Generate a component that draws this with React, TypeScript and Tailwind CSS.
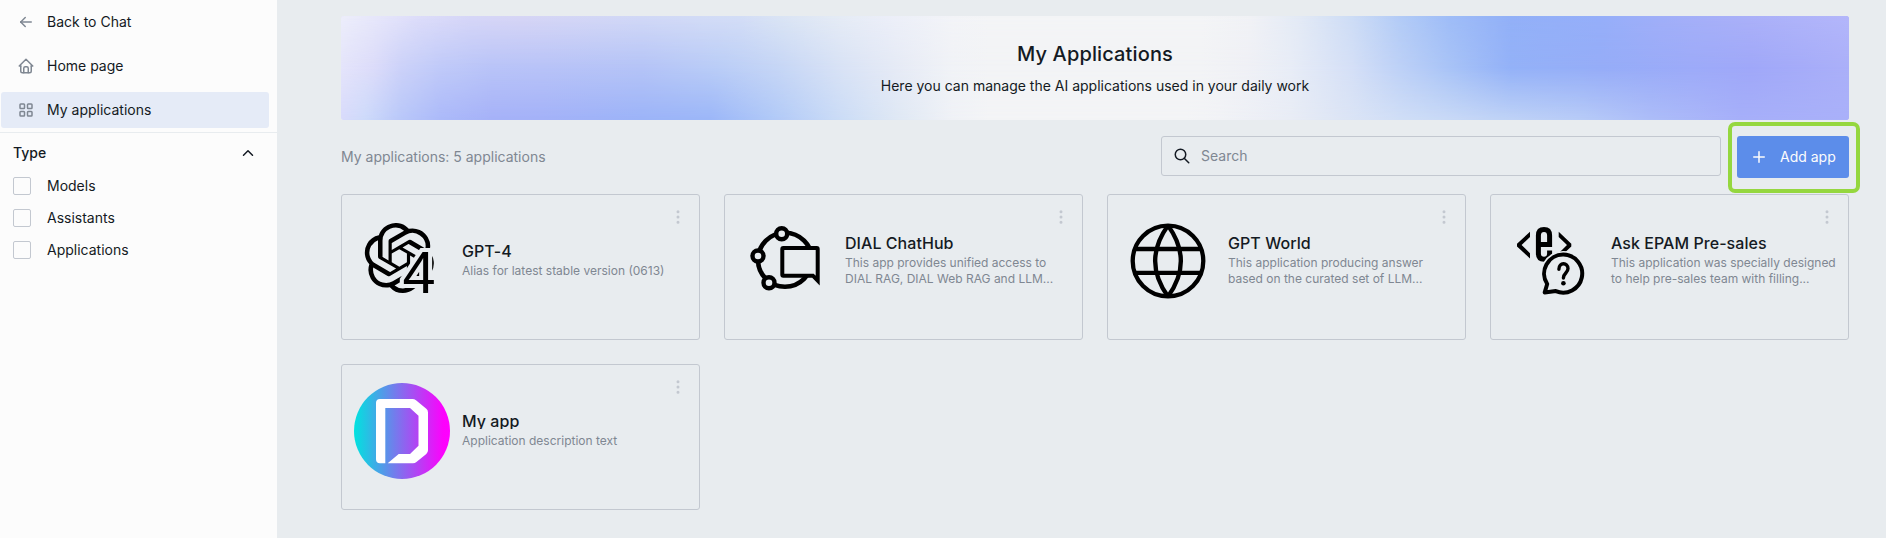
import type { ReactNode } from 'react';
import { SiOpenai } from 'react-icons/si';
import {
  TbArrowLeft,
  TbChevronUp,
  TbDotsVertical,
  TbHome,
  TbLayoutGrid,
  TbPlus,
  TbSearch,
} from 'react-icons/tb';

function GptIcon() {
  return (
    <svg width="96" height="96" viewBox="0 0 96 96">
      <SiOpenai x="10.3" y="10" width="70" height="70" size={70} color="#000" />
      <text
        x="48.4"
        y="80"
        fontFamily="Liberation Sans, sans-serif"
        fontSize="59.5"
        fill="#000"
        stroke="#e8ecef"
        strokeWidth="8"
        paintOrder="stroke"
      >
        4
      </text>
    </svg>
  );
}

function ChatHubIcon() {
  return (
    <svg width="96" height="96" viewBox="0 0 96 96" fill="#e8ecef" stroke="#000">
      <circle cx="48" cy="46.8" r="27" strokeWidth="4.6" />
      <circle cx="44.7" cy="20.7" r="5.5" strokeWidth="4.4" />
      <circle cx="21" cy="43" r="5.5" strokeWidth="4.4" />
      <circle cx="32" cy="69.8" r="5.5" strokeWidth="4.4" />
      <path d="M46.3 35H79.7a1 1 0 0 1 1 1V67.6L75.9 62.7H46.3a1 1 0 0 1-1-1V36a1 1 0 0 1 1-1z" strokeWidth="4" />
    </svg>
  );
}

function GlobeIcon() {
  return (
    <svg width="96" height="96" viewBox="0 0 96 96" fill="none" stroke="#000" strokeWidth="4.3">
      <circle cx="48" cy="48" r="35.3" />
      <path d="M15 36H81M15 59.8H81M48 12.5C31 36 31 60 48 83.5M48 12.5C65 36 65 60 48 83.5" />
    </svg>
  );
}

function PreSalesIcon() {
  return (
    <svg width="96" height="96" viewBox="0 0 96 96" fill="none" stroke="#000">
      <path
        d="M27 18.7V24L18.6 32 27 40.2V45.4L14 33.5V30.7zM55.7 18.7V24L64 32 55.7 40.2V45.4L68.3 33.5V30.7z"
        fill="#000"
        stroke="none"
      />
      <path d="M36 31.6H46.6V22.5Q46.6 16.6 41 16.6T35.4 22.5V40.5Q35.4 46.2 41 46.2T46.6 40.5V37.5" strokeWidth="5" />
      <path
        d="M60.4 41.6a19 19 0 1 1-7.6 36.5L41.7 79.4 44.4 71.2A19 19 0 0 1 60.4 41.6z"
        stroke="#e8ecef"
        strokeWidth="7.4"
      />
      <path
        d="M60.4 41.6a19 19 0 1 1-7.6 36.5L41.7 79.4 44.2 71A19 19 0 0 1 60.4 41.6z"
        fill="#e8ecef"
        strokeWidth="4"
        strokeLinejoin="round"
      />
      <path
        d="M55.9 56.2C55.9 49 65 49 65 55.6C65 60 60.4 60 60.4 65"
        strokeWidth="3.4"
        strokeLinecap="round"
      />
      <circle cx="60.4" cy="70.3" r="2.3" fill="#000" stroke="none" />
    </svg>
  );
}

function DialIcon() {
  return (
    <svg width="96" height="96" viewBox="0 0 96 96">
      <defs>
        <linearGradient id="dial" x1="0" x2="1" y1="0" y2="0">
          <stop offset="0" stopColor="#00e3df" />
          <stop offset="0.93" stopColor="#fc02fc" />
          <stop offset="1" stopColor="#ff00ff" />
        </linearGradient>
      </defs>
      <circle cx="48" cy="48" r="48" fill="url(#dial)" />
      <path
        d="M26 16H58.5Q60.4 16 62 17.3L72.3 25.8Q74 27.2 74 29.4V67.3Q74 69.5 72.3 70.9L62.4 79.1Q61 80.3 59 80.3H33.7L44.7 71H56L64.5 62.7V32.7L56 25H31.3V80.3H26Q22 80.3 22 76.3V20Q22 16 26 16z"
        fill="#fff"
      />
    </svg>
  );
}

const apps: { title: string; lines: string[]; icon: ReactNode }[] = [
  { title: 'GPT-4', lines: ['Alias for latest stable version (0613)'], icon: <GptIcon /> },
  {
    title: 'DIAL ChatHub',
    lines: ['This app provides unified access to', 'DIAL RAG, DIAL Web RAG and LLM...'],
    icon: <ChatHubIcon />,
  },
  {
    title: 'GPT World',
    lines: ['This application producing answer', 'based on the curated set of LLM...'],
    icon: <GlobeIcon />,
  },
  {
    title: 'Ask EPAM Pre-sales',
    lines: ['This application was specially designed', 'to help pre-sales team with filling...'],
    icon: <PreSalesIcon />,
  },
  { title: 'My app', lines: ['Application description text'], icon: <DialIcon /> },
];

const types = ['Models', 'Assistants', 'Applications'];

function NavItem({ icon, label, active }: { icon: ReactNode; label: string; active?: boolean }) {
  return (
    <button
      className={
        active
          ? 'flex h-9 w-full items-center gap-3 rounded-[3px] bg-[#e5ebf7] pl-4 text-left'
          : 'flex h-9 w-full items-center gap-3 rounded-[3px] pl-4 text-left'
      }
    >
      <span className="text-[#7f8792]">{icon}</span>
      <span>{label}</span>
    </button>
  );
}

function Sidebar() {
  return (
    <aside className="flex w-[277px] shrink-0 flex-col bg-[#fcfcfc]">
      <nav className="flex h-[133px] flex-col gap-2 border-b border-[#e8ecef] pt-1 pr-2 pl-px">
        <NavItem icon={<TbArrowLeft size={18} />} label="Back to Chat" />
        <NavItem icon={<TbHome size={18} />} label="Home page" />
        <NavItem icon={<TbLayoutGrid size={18} />} label="My applications" active />
      </nav>
      <div className="flex h-10 items-center justify-between pr-5 pl-[13px]">
        <span className="font-medium">Type</span>
        <TbChevronUp size={18} />
      </div>
      <div className="flex flex-col gap-3 pt-[3px] pl-[13px]">
        {types.map((type) => (
          <label key={type} className="flex h-5 items-center gap-4">
            <span className="size-[18px] rounded-[2px] border border-[#c3c8d0]" />
            {type}
          </label>
        ))}
      </div>
    </aside>
  );
}

function Banner() {
  return (
    <section className="relative h-[104px] overflow-hidden rounded-[3px] bg-[linear-gradient(90deg,#e5e5fb_0%,#dcdcfa_2.2%,#ccd2f9_4%,#c0caf9_6.6%,#b9c4f8_10%,#b8c3f8_13.3%,#b5c4f7_20%,#bacdf7_25%,#c6d6f6_29%,#d9e3f6_33.2%,#e5eaf6_36.5%,#f1f3f7_40.5%,#f3f4f6_43%,#f3f4f6_57%,#f0f1f6_60%,#e8edf7_63%,#d5e0f7_67%,#bfd2f7_70%,#a9c4f7_73.5%,#94b2f8_77.5%,#96adf8_83.5%,#9dabf9_89.5%,#a0a8f9_93.5%,#abb0f9_100%)]">
      <div className="absolute inset-0 bg-[linear-gradient(90deg,#ecedfa_0%,#e3e3fa_3.3%,#dcdcf9_5.3%,#d6d6f7_8.6%,#d6d5f5_12%,#d1d8f6_20%,#d3ddf6_26.5%,#dae4f4_29.2%,#e5ebf5_33.2%,#ebeef8_36.2%,#f2f3f7_40.5%,#f3f4f6_43%,#f3f4f6_57%,#f0f1f5_60.3%,#e2e9f5_63.6%,#cddcf5_67%,#b2cbf6_70.2%,#9ebcf7_73.5%,#92b0f7_77.5%,#95aef9_83.5%,#a0aef8_87.5%,#aab0f8_93.4%,#b3b6fa_100%)] [mask-image:linear-gradient(180deg,black_0%,transparent_50%)]" />
      <div className="absolute inset-0 bg-[linear-gradient(90deg,#d8dafb_0%,#cddafa_1.6%,#b8c7f9_4%,#abb9f9_6.6%,#a5b1f8_10%,#a3b1f8_13.3%,#9bb3f8_20%,#9bb6f8_24.5%,#afc8f7_28.5%,#cbdcf6_33.2%,#dfe8f4_37%,#eff1f6_40.5%,#f3f4f6_43%,#f3f4f6_56%,#f1f2f6_58.3%,#e8ecf5_63%,#dde5f5_66.2%,#d0def6_70.2%,#c0d3f6_77%,#b8ccf7_82%,#adbdf8_86.8%,#a6aff9_92.8%,#a9b0f9_100%)] [mask-image:linear-gradient(180deg,transparent_50%,black_100%)]" />
      <div className="relative flex flex-col items-center pt-6">
        <h1 className="text-xl leading-7 font-medium tracking-[0.13px]">My Applications</h1>
        <p className="mt-2 leading-5">Here you can manage the AI applications used in your daily work</p>
      </div>
    </section>
  );
}

export default function App() {
  return (
    <div className="flex h-[538px] w-[1886px] overflow-hidden bg-[#e8ecef] font-['Inter',sans-serif] text-sm leading-5 text-[#141a23]">
      <Sidebar />
      <main className="flex-1 pt-4 pr-[37px] pl-16">
        <Banner />
        <div className="mt-4 flex h-[42px] items-start gap-4">
          <div className="flex-1 pt-[11px] text-[#7f8792]">My applications: 5 applications</div>
          <div className="flex h-10 w-[560px] items-center gap-2.5 rounded-[3px] border border-[#c3c8d0] pl-[11px] text-[#7f8792]">
            <TbSearch size={18} className="text-[#141a23]" />
            Search
          </div>
          <div className="relative">
            <button className="flex h-[42px] w-28 items-center gap-3 rounded-[3px] bg-[#5c8dea] pl-[13px] text-[#fcfcfc]">
              <TbPlus size={18} />
              Add app
            </button>
            <div className="pointer-events-none absolute -top-3.5 -right-[11px] -bottom-[15px] -left-[9px] rounded-[7px] border-4 border-[#95d73f]" />
          </div>
        </div>
        <div className="mt-4 grid grid-cols-4 gap-6">
          {apps.map((app) => (
            <article
              key={app.title}
              className="relative flex h-[146px] items-center gap-3 rounded-[3px] border border-[#c3c8d0] pb-3 pl-3"
            >
              <div className="size-24 shrink-0">{app.icon}</div>
              <div className="min-w-0">
                <h2 className="mb-1 overflow-hidden text-base leading-4 font-medium tracking-[0.05px]">{app.title}</h2>
                <p className="text-xs leading-4 whitespace-nowrap text-[#7f8792]">
                  {app.lines.map((line) => (
                    <span key={line} className="block">
                      {line}
                    </span>
                  ))}
                </p>
              </div>
              <TbDotsVertical size={18} className="absolute top-[13px] right-3 text-[#c3c8d0]" />
            </article>
          ))}
        </div>
      </main>
    </div>
  );
}
